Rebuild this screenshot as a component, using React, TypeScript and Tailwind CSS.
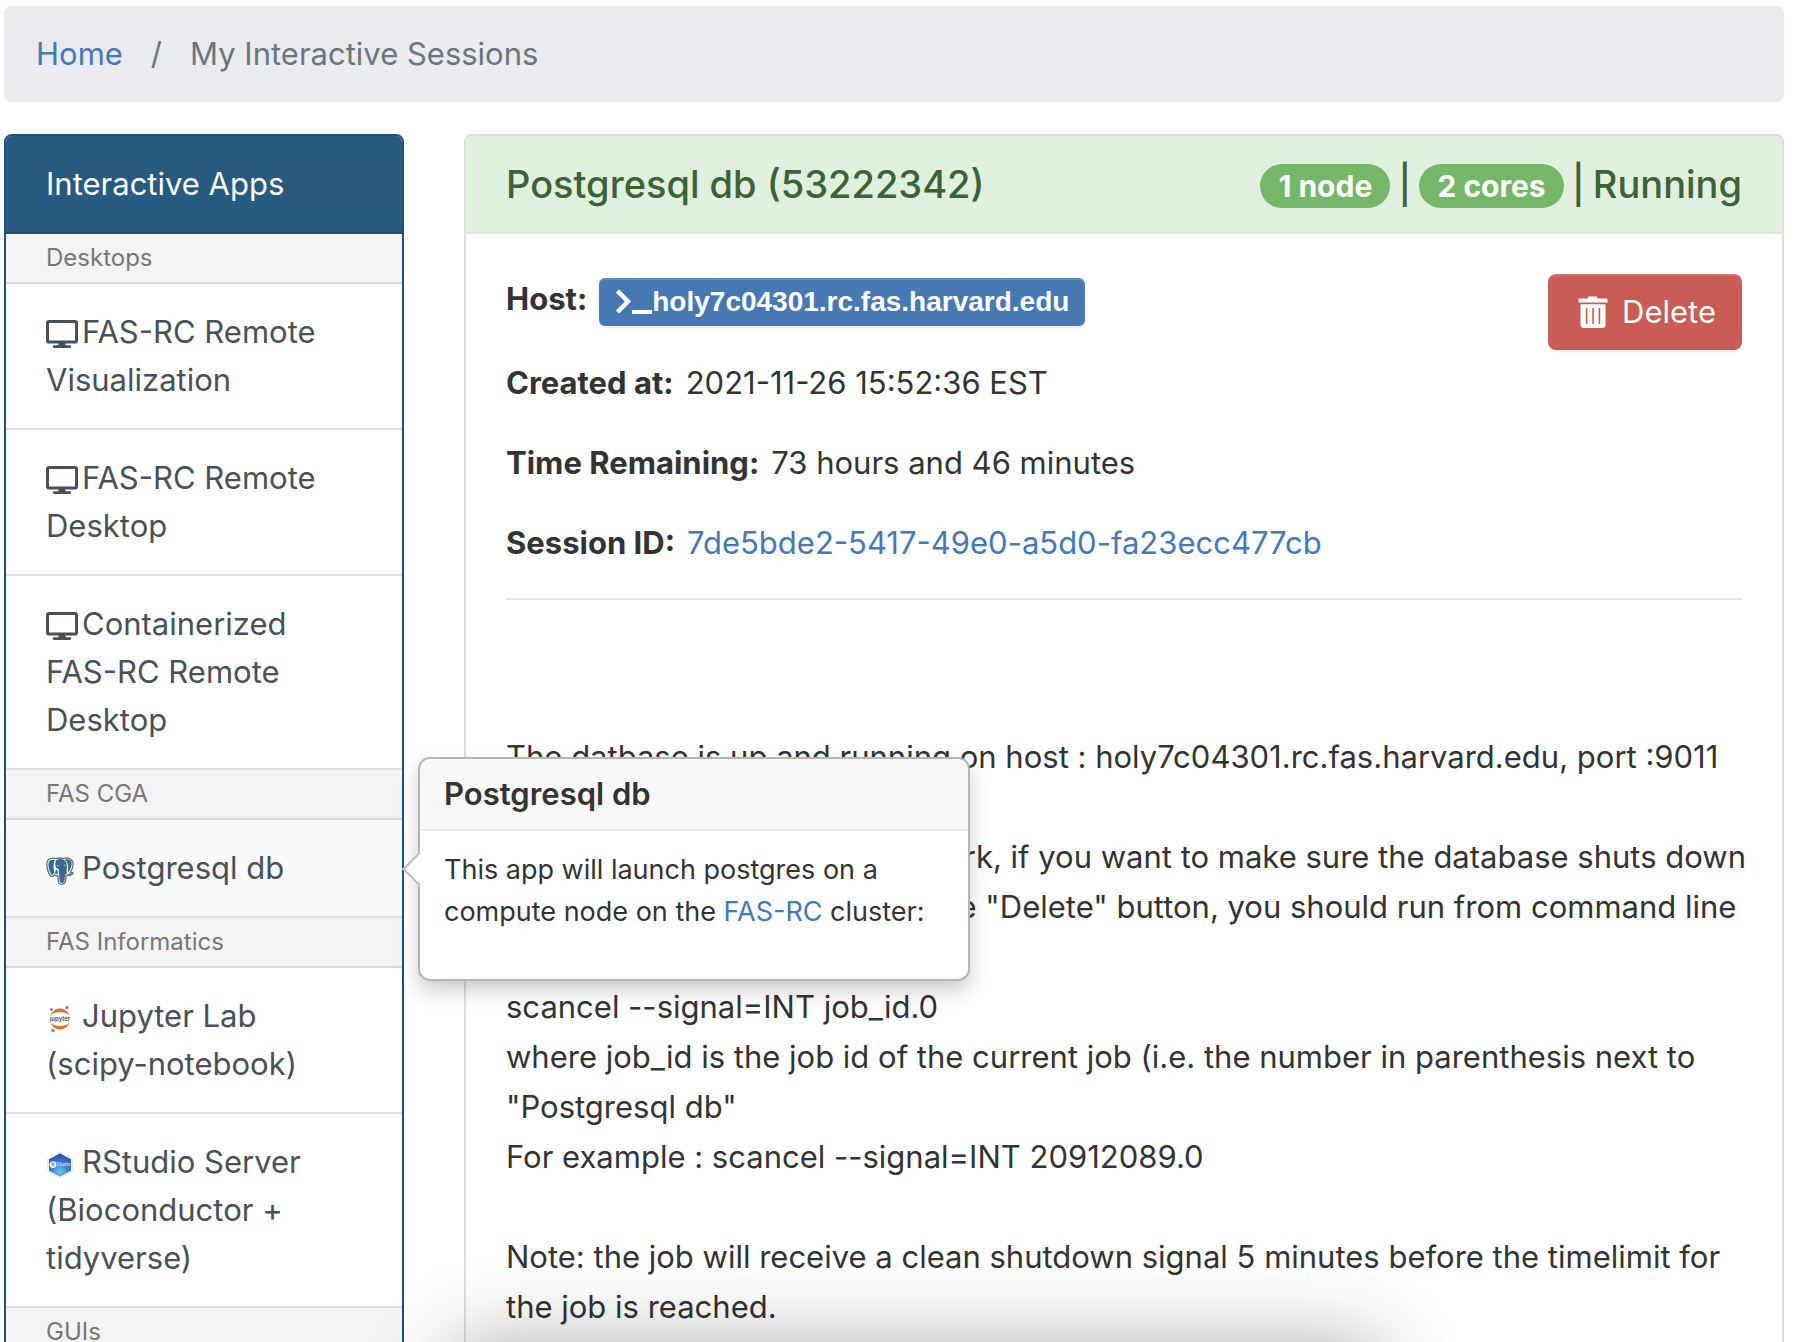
import type { ReactNode } from 'react'

function MonitorIcon() {
  return (
    <svg viewBox="0 0 32 28" className="mr-1 inline-block h-7 w-8 align-[-5px]" aria-hidden="true">
      <rect x="1.500" y="1.500" width="29" height="20.500" rx="1.600" fill="none" stroke="currentColor" strokeWidth="3" />
      <path d="M13 22h6l.8 3.200h4a1.400 1.400 0 0 1 0 2.800H8.200a1.400 1.400 0 0 1 0-2.800h4z" fill="currentColor" />
    </svg>
  )
}

function PostgresIcon() {
  return (
    <svg viewBox="0 0 28 28" className="mr-2 inline-block size-7 align-[-6px]" aria-hidden="true">
      <path
        d="M10 1.6C6.500 .4 1 .9.8 7c-.1 4 2 11.300 4.400 12.300 1.300.5 2.300-.3 3.300-1.500.9.900 2 1.200 3.400 1 .3 2.700.1 4.700.6 6.300.6 2.100 2.300 2.400 3.800 2.100 2-.4 3.100-1.400 3.300-3.300l.5-5.600c2.800.2 5.800-.3 7-2 .3-.6-.5-.9-2.900-.5C26.300 12.300 27.600 7.900 26.800 5 25.800 1.500 21 .2 17.300 1.500 15 .9 12.500.8 10 1.600z"
        fill="#fff" stroke="#6b6f72" strokeWidth="1.300"
      />
      <path d="M9 3C5.600 2 2.600 3 2.400 7c-.1 3.800 1.700 9.500 3.300 10.700 1 .6 2-.9 3-2.200C7.200 12.500 7 7 9 3z" fill="#3a678f" />
      <path d="M18.800 2.700c3.600-1 6.300.2 6.800 2.900.5 3-1.300 7.200-3.500 10 0-1.400-.2-2.200-.1-3.700.6-3.700-.6-7-3.200-9.200z" fill="#3a678f" />
      <path
        d="M10.400 3c3-1.500 8-1.500 9.600 2.200 1.500 3 .8 6.400.6 8.500l.3 3-1.700.2-.7 6.900c-.2 1.400-1.200 2-2.600 2.100-1.500 0-2.200-.8-2.400-2.300l-.6-10c-.1-1.800-.8-2.500-2.500-2.300C8.800 8.300 9 4.800 10.400 3z"
        fill="#3a678f"
      />
      <path d="M9.700 12.800c1.700-.2 2 .6 1.900 2.300l.2 2c-1.200.2-2.300 0-2.700-.9z" fill="#3a678f" />
      <path d="M11.300 8.700h1.300M17.800 8.200h1.300" stroke="#fff" strokeWidth="1" />
      <path d="M21 17.300c1.800.4 3.600.2 4.800-.5" stroke="#3a678f" strokeWidth=".9" fill="none" />
    </svg>
  )
}

function JupyterIcon() {
  return (
    <svg viewBox="0 0 28 28" className="mr-2 inline-block size-7 align-[-6px]" aria-hidden="true">
      <path d="M4.600 10.200C6.200 6 9.800 3.600 14 3.600s7.800 2.400 9.400 6.600C21 7.800 17.800 6.900 14 6.900s-7 .9-9.400 3.300z" fill="#e46e2e" />
      <path d="M4.600 17.800c1.600 4.200 5.200 6.600 9.400 6.600s7.800-2.400 9.400-6.600c-2.400 2.400-5.600 3.300-9.400 3.300s-7-.9-9.400-3.300z" fill="#e46e2e" />
      <text x="14" y="15.800" textAnchor="middle" fontSize="6" fontWeight="600" fill="#4e4e4e" fontFamily="Inter, sans-serif">jupyter</text>
      <circle cx="21" cy="2.600" r="1.500" fill="#767677" />
      <circle cx="5.500" cy="4.500" r="1.200" fill="#616262" />
      <circle cx="7" cy="25.500" r="1.800" fill="#8a8a8a" />
    </svg>
  )
}

function RStudioIcon() {
  return (
    <svg viewBox="0 0 28 28" className="mr-2 inline-block size-7 align-[-6px]" aria-hidden="true">
      <defs>
        <radialGradient id="hexFill" cx=".5" cy=".8" r=".75">
          <stop offset="0" stopColor="#6cc4ee" />
          <stop offset=".5" stopColor="#3b83cc" />
          <stop offset="1" stopColor="#304ea6" />
        </radialGradient>
      </defs>
      <path d="M14 .8 26.200 7.500v13L14 27.200 1.800 20.500v-13z" fill="#fff" stroke="#dcdcdc" strokeWidth=".8" />
      <path d="M14 2.200 25 8.300v11.400L14 25.800 3 19.700V8.300z" fill="url(#hexFill)" />
      <circle cx="7" cy="13.600" r="3.400" fill="#fff" />
      <path d="M6 15.400v-3.600h1.300a1 1 0 0 1 0 2H6.200M7.200 13.800l1 1.600" fill="none" stroke="#3b6fb8" strokeWidth=".8" />
      <text x="17.600" y="15.200" textAnchor="middle" fontSize="4.500" fontWeight="600" fill="#c9def4" fontFamily="Inter, sans-serif">Studio</text>
    </svg>
  )
}

function TerminalIcon() {
  return (
    <svg viewBox="0 0 37 28" className="h-7 w-[37px] shrink-0" aria-hidden="true">
      <path d="M2.500 3 13 13.500 2.500 24" fill="none" stroke="currentColor" strokeWidth="4.500" />
      <path d="M17 22h20v4H17z" fill="currentColor" />
    </svg>
  )
}

function TrashIcon() {
  return (
    <svg viewBox="0 0 30 32" className="h-8 w-[30px]" aria-hidden="true">
      <path d="M1.500 2.500H9.500L10.500 .5h8.500l1 2h8.500a1 1 0 0 1 1 1V6.500H.5V3.500a1 1 0 0 1 1-1z" fill="currentColor" />
      <path
        fillRule="evenodd" fill="currentColor"
        d="M2.500 8.300h25V29a3 3 0 0 1-3 3h-19a3 3 0 0 1-3-3zM7.800 12v16h1.600V12zM14.200 12v16h1.600V12zM20.600 12v16h1.600V12z"
      />
    </svg>
  )
}

function GroupHeader({ children }: { children: ReactNode }) {
  return <h3 className="border-b-2 border-[#d8d8d8] bg-[#f4f4f4] px-10 text-2xl leading-[48px] text-[#777]">{children}</h3>
}

function AppLink({ icon, children, active = false }: { icon: ReactNode; children: ReactNode; active?: boolean }) {
  return (
    <a
      href="#app"
      className={`block border-b-2 border-[#dedede] py-6 pr-20 pl-10 leading-[48px] text-[#495057] ${active ? 'bg-[#f8f9fa]' : 'bg-white'}`}
    >
      {icon}
      {children}
    </a>
  )
}

function Popover() {
  return (
    <div
      role="tooltip"
      className="absolute top-1/2 left-full z-10 ml-4 w-[552px] -translate-y-1/2 rounded-xl border-2 border-[#b5b5b5] bg-white text-[#333] shadow-[0_10px_20px_rgba(0,0,0,0.2)]"
    >
      <span className="absolute top-1/2 -left-[13px] size-6 -translate-y-1/2 rotate-45 border-b-2 border-l-2 border-[#bbb] bg-white" />
      <h4 className="rounded-t-xl border-b-2 border-[#ebebeb] bg-[#f7f7f7] px-6 py-3 text-[31px] leading-[46px] font-semibold">Postgresql db</h4>
      <p className="relative px-6 pt-[18px] pb-[46px] text-[27px] leading-[42px]">
        This app will launch postgres on a<br />
        compute node on the <a href="#fasrc" className="text-[#4479b5]">FAS-RC</a> cluster:
      </p>
    </div>
  )
}

function Badge({ children }: { children: ReactNode }) {
  return <span className="mt-1 rounded-[22px] bg-[#75b768] px-[18px] text-[30px] leading-[44px] font-bold text-white">{children}</span>
}

export default function App() {
  return (
    <div className="relative h-screen overflow-hidden bg-white pt-1.5 pr-2.5 pl-1 font-['Inter',sans-serif] text-[31px] text-[#333]">
      <nav aria-label="Breadcrumb" className="rounded-lg bg-[#e9ebef] px-8 py-6 leading-[48px] text-[#6c757d]">
        <ol className="flex gap-7">
          <li><a href="#home" className="text-[#4479b5]">Home</a></li>
          <li aria-hidden="true">/</li>
          <li>My Interactive Sessions</li>
        </ol>
      </nav>

      <div className="mt-8 flex gap-[60px]">
        <aside className="w-[400px] shrink-0 rounded-t-lg border-2 border-[#1f5075]">
          <h2 className="rounded-t-md border-b-2 border-[#1f5075] bg-[#265a7f] px-10 py-6 leading-[48px] text-white">Interactive Apps</h2>
          <GroupHeader>Desktops</GroupHeader>
          <AppLink icon={<MonitorIcon />}>FAS-RC Remote Visualization</AppLink>
          <AppLink icon={<MonitorIcon />}>FAS-RC Remote Desktop</AppLink>
          <AppLink icon={<MonitorIcon />}>Containerized FAS-RC Remote Desktop</AppLink>
          <GroupHeader>FAS CGA</GroupHeader>
          <div className="relative">
            <AppLink icon={<PostgresIcon />} active>Postgresql db</AppLink>
            <Popover />
          </div>
          <GroupHeader>FAS Informatics</GroupHeader>
          <AppLink icon={<JupyterIcon />}>Jupyter Lab (scipy-notebook)</AppLink>
          <AppLink icon={<RStudioIcon />}>RStudio Server (Bioconductor + tidyverse)</AppLink>
          <GroupHeader>GUIs</GroupHeader>
        </aside>

        <main className="min-w-0 flex-1 rounded-t-lg border-2 border-[#ddd]">
          <header className="flex items-center justify-between rounded-t-md border-b-2 border-[#d6e9d3] bg-[#e0f0de] px-10 py-6 text-[38px] leading-[48px] font-medium text-[#3c6336]">
            <h1>Postgresql db (53222342)</h1>
            <div className="flex items-center gap-2">
              <Badge>1 node</Badge>
              <span>|</span>
              <Badge>2 cores</Badge>
              <span>|</span>
              <span>Running</span>
            </div>
          </header>

          <section className="px-10 pt-10">
            <div className="flex items-start justify-between">
              <dl className="leading-[50px]">
                <div className="flex items-start gap-3">
                  <dt className="font-bold">Host:</dt>
                  <dd>
                    <button type="button" className="mt-1 flex h-12 items-center rounded-md bg-[#4678b2] px-4 font-['Liberation_Sans',sans-serif] text-[28px] font-bold text-white shadow-[inset_0_2px_0_rgba(255,255,255,0.15),0_2px_2px_rgba(0,0,0,0.08)]">
                      <TerminalIcon />
                      holy7c04301.rc.fas.harvard.edu
                    </button>
                  </dd>
                </div>
                <div className="mt-8 flex gap-3">
                  <dt className="font-bold">Created at:</dt>
                  <dd>2021-11-26 15:52:36 EST</dd>
                </div>
                <div className="mt-[30px] flex gap-3">
                  <dt className="font-bold">Time Remaining:</dt>
                  <dd>73 hours and 46 minutes</dd>
                </div>
                <div className="mt-[30px] flex gap-3">
                  <dt className="font-bold">Session ID:</dt>
                  <dd><a href="#session" className="text-[#4479b5]">7de5bde2-5417-49e0-a5d0-fa23ecc477cb</a></dd>
                </div>
              </dl>
              <button type="button" className="flex h-[76px] items-center gap-3.5 rounded-lg bg-[#c95c54] pr-[26px] pl-[30px] text-white shadow-[inset_0_2px_0_rgba(255,255,255,0.15),0_2px_2px_rgba(0,0,0,0.08)]">
                <TrashIcon />
                Delete
              </button>
            </div>
            <hr className="mt-[30px] border-t-2 border-[#e6e6e6]" />
            <div className="pt-[132px] leading-[50px]">
              <p>The datbase is up and running on host : holy7c04301.rc.fas.harvard.edu, port :9011</p>
              <p className="mt-[50px] whitespace-nowrap">
                If clean shut down does not work, if you want to make sure the database shuts down<br />
                cleanly, rather than pressing the "Delete" button, you should run from command line
              </p>
              <p className="mt-[50px]">
                scancel --signal=INT job_id.0<br />
                where job_id is the job id of the current job (i.e. the number in parenthesis next to "Postgresql db"<br />
                For example : scancel --signal=INT 20912089.0
              </p>
              <p className="mt-[50px]">
                Note: the job will receive a clean shutdown signal 5 minutes before the timelimit for the job is reached.
              </p>
            </div>
          </section>
        </main>
      </div>

      <div className="pointer-events-none absolute top-full right-[23%] left-[25%] h-40 rounded-xl shadow-[0_0_80px_rgba(0,0,0,0.32)]" />
    </div>
  )
}
